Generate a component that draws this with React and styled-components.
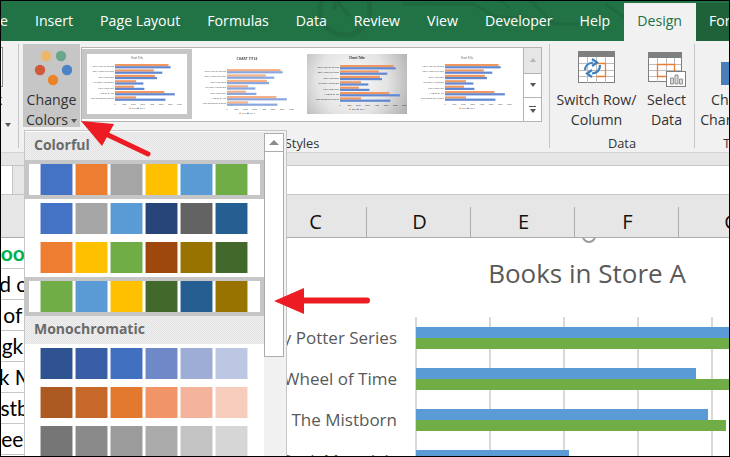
import React from "react";
import styled, { createGlobalStyle } from "styled-components";

const TABS = ["Home", "Insert", "Page Layout", "Formulas", "Data", "Review", "View", "Developer", "Help"];
const COLUMNS = ["A", "B", "C", "D", "E", "F", "G"];
const CELLS = [
  { text: "Books", indent: -13, green: true },
  { text: "Lord of", indent: -30 },
  { text: "Song of", indent: -48 },
  { text: "Kingkiller", indent: -29 },
  { text: "Dark M", indent: -35 },
  { text: "Mistborn", indent: -24 },
  { text: "Sleeping", indent: -15 },
];
const BOOKS = [
  { name: "Harry Potter Series", blue: 330, green: 330 },
  { name: "The Wheel of Time", blue: 280, green: 330 },
  { name: "The Mistborn", blue: 292, green: 310 },
  { name: "His Dark Materials", blue: 153, green: 110 },
];
const PALETTES = [
  {
    title: "Colorful",
    rows: [
      { picked: true, colors: ["#4472c4", "#ed7d31", "#a5a5a5", "#ffc000", "#5b9bd5", "#70ad47"] },
      { colors: ["#4472c4", "#a5a5a5", "#5b9bd5", "#264478", "#636363", "#255e91"] },
      { colors: ["#ed7d31", "#ffc000", "#70ad47", "#9e480e", "#997300", "#43682b"] },
      { picked: true, colors: ["#70ad47", "#5b9bd5", "#ffc000", "#43682b", "#255e91", "#997300"] },
    ],
  },
  {
    title: "Monochromatic",
    rows: [
      { colors: ["#2f5290", "#3a5ea6", "#4170c0", "#6f88c8", "#9dadd6", "#bcc8e3"] },
      { colors: ["#ad5a22", "#c5682a", "#e3782f", "#f19467", "#f3b49b", "#f6ccbd"] },
      { colors: ["#767676", "#8a8a8a", "#9b9b9b", "#ababab", "#c3c3c3", "#d6d6d6"] },
    ],
  },
];

// orange / blue lengths for the small gallery charts
const THUMB_BARS = [
  [51, 53],
  [37, 45],
  [38, 40],
  [20, 27],
  [18, 28],
  [47, 57],
  [20, 48],
];
const THUMB_LABELS = [
  "Harry Potter Series",
  "The Wheel of Time",
  "The Mistborn",
  "His Dark Materials",
  "The Kingkiller",
  "A Song of Ice",
  "The Sleeping Giants",
];
const THUMBS = [
  { key: 1, title: "Chart Title", x: 28, y: 12, step: 5.4, size: 2.6, picked: true },
  { key: 2, title: "CHART TITLE", x: 30, y: 17, step: 5.4, size: 3.4, titleY: 6, hatch: true },
  { key: 3, title: "Chart Title", x: 33, y: 13, step: 5.4, size: 3, dark: true, metal: true },
  { key: 4, title: "Chart Title", x: 28, y: 12, step: 5.4, size: 2.6 },
];

const GlobalStyle = createGlobalStyle`
  html, body {
    margin: 0;
    padding: 0;
    background: #fff;
    font-family: "Open Sans", "Noto Sans", sans-serif;
  }
`;

const Page = styled.div`
  position: relative;
  width: 730px;
  height: 457px;
  overflow: hidden;
  display: flex;
  flex-direction: column;
  background: #fff;

  &::after {
    content: "";
    position: absolute;
    inset: 0;
    border: 1px solid #000;
    pointer-events: none;
    z-index: 20;
  }
`;

const TabBar = styled.div`
  position: relative;
  flex: none;
  height: 41px;
  display: flex;
  align-items: flex-end;
  margin-left: -45.5px;
  background: #217346;
  color: #fff;
`;

const TabArt = styled.svg`
  position: absolute;
  left: 45.5px;
  top: 0;
`;

const Tab = styled.div`
  position: relative;
  flex: none;
  height: 38px;
  padding: 0 13.5px;
  font-size: 14.15px;
  line-height: 36px;
  text-align: center;
  background: ${(p) => (p.$active ? "#f1f1f1" : "transparent")};
  color: ${(p) => (p.$active ? "#217346" : "#fff")};
`;

const DarkTab = styled(Tab)`
  flex: 1;
  text-align: left;
  background: #1f6239;
`;

const Ribbon = styled.div`
  flex: none;
  height: 111px;
  display: flex;
  background: #f1f1f1;
  color: #333;
`;

const Group = styled.div`
  flex: none;
  width: ${(p) => p.$width}px;
  height: 104px;
  margin-top: 3px;
  display: flex;
  flex-direction: column;
  border-right: 1px solid ${(p) => (p.$open ? "transparent" : "#c6c6c6")};
  box-sizing: border-box;
`;

const GroupBody = styled.div`
  flex: 1;
  display: flex;
  align-items: flex-start;
  padding-left: ${(p) => p.$pad || 0}px;
  gap: ${(p) => p.$gap || 0}px;
`;

const GroupLabel = styled.div`
  flex: none;
  height: 20px;
  padding-top: 7px;
  box-sizing: border-box;
  font-size: 12.8px;
  line-height: 16px;
  text-align: center;
`;

const StubBox = styled.div`
  width: 3px;
  height: 40px;
  margin-top: 3px;
  box-sizing: border-box;
  border: 1px solid #8a8a8a;
  border-left: 0;
  background: #fff;
`;

const StubColumn = styled.div`
  display: flex;
  flex-direction: column;
  font-size: 14px;
`;

const StubText = styled.div`
  height: 20px;
  margin: 3px 0 0 -5px;
  line-height: 20px;
`;

const Caret = styled.span`
  display: inline-block;
  width: 0;
  height: 0;
  margin-left: ${(p) => p.$left || 3}px;
  vertical-align: middle;
  border-left: 3.5px solid transparent;
  border-right: 3.5px solid transparent;
  border-top: 4px solid #555;
`;

const StubCaret = styled(Caret)`
  margin: 13px 0 0 5px;
`;

const BigButton = styled.div`
  flex: none;
  width: ${(p) => p.$width}px;
  height: 83px;
  display: flex;
  flex-direction: column;
  align-items: center;
  box-sizing: border-box;
  padding-top: ${(p) => p.$top || 0}px;
  background: ${(p) => (p.$active ? "#c6c6c6" : "transparent")};
  font-size: 14.2px;
  line-height: 20px;
  text-align: center;
  white-space: nowrap;
`;

const ButtonIcon = styled.svg`
  flex: none;
  margin-bottom: ${(p) => p.$gap || 0}px;
`;

const Gallery = styled.div`
  flex: none;
  display: flex;
  width: 443px;
  height: 75px;
  margin: 3px 0 0 1px;
  box-sizing: border-box;
  border: 1px solid #b4b4b4;
  background: #fff;
`;

const ThumbFrame = styled.div`
  flex: none;
  width: 110px;
  height: 70px;
  margin-top: 1px;
  box-sizing: border-box;
  border: 5px solid ${(p) => (p.$picked ? "#c6c6c6" : "transparent")};
  background: ${(p) =>
    p.$metal
      ? "radial-gradient(circle at 45% 45%, #fbfbfb 0, #e4e4e4 55%, #aeaeae 100%) padding-box"
      : "#fff padding-box"};
`;

const ThumbArt = styled.svg`
  display: block;
  width: 100px;
  height: 60px;
  filter: blur(0.45px);
`;

const GalleryScroll = styled.div`
  flex: none;
  width: 18px;
  height: 75px;
  margin-top: 3px;
  display: flex;
  flex-direction: column;
  box-sizing: border-box;
  border: 1px solid #b4b4b4;
  border-left: 0;
`;

const ScrollStep = styled.div`
  flex: ${(p) => p.$size};
  display: flex;
  flex-direction: column;
  align-items: center;
  justify-content: center;
  gap: 2px;
  background: ${(p) => (p.$off ? "#e6e6e6" : "#fff")};
  border-bottom: ${(p) => (p.$last ? "none" : "1px solid #b4b4b4")};
`;

const ScrollBarLine = styled.div`
  width: 7px;
  height: 1px;
  background: #555;
`;

const ScrollCaret = styled(Caret)`
  margin: 0;
  border-top-color: ${(p) => (p.$off ? "#b5b5b5" : "#555")};
  transform: ${(p) => (p.$up ? "rotate(180deg)" : "none")};
`;

const Band = styled.div`
  flex: none;
  height: 13px;
  box-sizing: border-box;
  background: #e6e6e6;
  border-top: 1px solid #d4d4d4;
`;

const FormulaBar = styled.div`
  flex: none;
  height: 30px;
  display: flex;
  box-sizing: border-box;
  background: #e6e6e6;
  border-top: 1px solid #c6c6c6;
  border-bottom: 1px solid #c6c6c6;
`;

const NameBox = styled.div`
  flex: none;
  width: 12px;
  display: flex;
  align-items: center;
  background: #fff;
  border-right: 1px solid #c6c6c6;
`;

const FormulaInput = styled.div`
  flex: 1;
  margin-left: 30px;
  background: #fff;
`;

const ColumnHeader = styled.div`
  flex: none;
  height: 43px;
  display: flex;
  align-items: flex-end;
  padding-left: 55px;
  box-sizing: border-box;
  background: #e6e6e6;
  border-bottom: 1px solid #ababab;
`;

const ColumnCell = styled.div`
  flex: none;
  width: 104px;
  height: 30px;
  padding-left: 2px;
  box-sizing: border-box;
  border-right: 1px solid #ababab;
  font-size: 20px;
  line-height: 30px;
  text-align: center;
  color: #111;
`;

const Sheet = styled.div`
  position: relative;
  flex: 1;
  display: flex;
  min-height: 0;
  overflow: hidden;
`;

const SheetCells = styled.div`
  flex: none;
  width: 24px;
  overflow: hidden;
`;

const Cell = styled.div`
  height: 31px;
  box-sizing: border-box;
  border-bottom: 1px solid #c6c6c6;
  font-family: Lato, "Open Sans", sans-serif;
  font-size: 21px;
  font-weight: ${(p) => (p.$green ? 700 : 400)};
  line-height: 30px;
  white-space: nowrap;
  color: ${(p) => (p.$green ? "#00b050" : "#000")};
`;

const Chart = styled.div`
  flex: none;
  width: 1126px;
  display: flex;
  flex-direction: column;
`;

const ChartTitle = styled.div`
  flex: none;
  height: 79px;
  padding-top: 17px;
  box-sizing: border-box;
  font-size: 26px;
  line-height: 36px;
  text-align: center;
  color: #595959;
`;

const ChartBody = styled.div`
  display: grid;
  grid-template-columns: 373px 1fr;
  column-gap: 18px;
`;

const ChartLabels = styled.div`
  display: flex;
  flex-direction: column;
`;

const ChartLabel = styled.div`
  height: 41px;
  font-size: 17px;
  line-height: 41px;
  text-align: right;
  white-space: nowrap;
  color: #595959;
`;

const Plot = styled.div`
  height: 180px;
  background: repeating-linear-gradient(to right, #d9d9d9 0 2px, transparent 2px 74px);
`;

const BarRow = styled.div`
  height: 41px;
  padding: 10px 0 0 1px;
  box-sizing: border-box;
`;

const Bar = styled.div`
  height: 11px;
  background: ${(p) => p.$color};
`;

const SelectionRing = styled.div`
  position: absolute;
  left: 582px;
  top: -9px;
  width: 14px;
  height: 14px;
  box-sizing: border-box;
  border: 2px solid #9a9a9a;
  border-radius: 50%;
  background: #fff;
`;

const Popup = styled.div`
  position: absolute;
  left: 24px;
  top: 130px;
  width: 263px;
  height: 327px;
  display: flex;
  box-sizing: border-box;
  border: 1px solid #c6c6c6;
  background: #fff;
  overflow: hidden;
  z-index: 5;
`;

const PaletteList = styled.div`
  flex: none;
  width: 239px;
  padding-top: 1px;
`;

const PaletteTitle = styled.div`
  height: 28px;
  padding-left: 9px;
  box-sizing: border-box;
  font-size: 14px;
  font-weight: 700;
  line-height: 26px;
  color: #6a6a6a;
  background: repeating-conic-gradient(#e3e3e3 0 25%, #efefef 0 50%) 0 0 / 2px 2px;
`;

const SwatchRow = styled.div`
  height: 39px;
  display: flex;
  gap: 4px;
  padding-left: 12px;
  box-sizing: border-box;
  border: 4px solid ${(p) => (p.$picked ? "#c6c6c6" : "transparent")};
`;

const Swatch = styled.div`
  flex: none;
  width: 31px;
  height: 31px;
  background: ${(p) => p.$color};
  box-shadow: -1px 0 0 ${(p) => p.$color}77, 1px 0 0 ${(p) => p.$color}77;
`;

const PopupScroll = styled.div`
  flex: 1;
  display: flex;
  flex-direction: column;
  padding: 2px 2px 0 0;
  background: #f1f1f1;
`;

const PopupScrollUp = styled.div`
  flex: none;
  height: 19px;
  display: flex;
  align-items: center;
  justify-content: center;
  box-sizing: border-box;
  border: 1px solid #ababab;
  background: #fff;
`;

const PopupScrollThumb = styled.div`
  flex: none;
  height: 205px;
  box-sizing: border-box;
  border: 1px solid #ababab;
  border-top: 0;
  background: #fff;
`;

const PopupCaret = styled.span`
  width: 0;
  height: 0;
  border-left: 5px solid transparent;
  border-right: 5px solid transparent;
  border-bottom: 5px solid #8a8a8a;
`;

const ArrowLayer = styled.svg`
  position: absolute;
  left: 0;
  top: 0;
  z-index: 10;
  pointer-events: none;
`;

function ThumbChart({ title, x, y, step, size, titleY = 4.5, dark, hatch }) {
  const ink = dark ? "#333" : "#555";
  return (
    <ThumbArt viewBox="0 0 100 60">
      <text x="50" y={titleY} fontSize={size} fontWeight={dark || hatch ? 700 : 400} textAnchor="middle" fill={ink}>
        {title}
      </text>
      {THUMB_BARS.map(([orange, blue], i) => (
        <g key={THUMB_LABELS[i]}>
          <text x={x - 1} y={y + i * step + 1} fontSize="2.5" textAnchor="end" fill={ink}>
            {THUMB_LABELS[i]}
          </text>
          <rect x={x} y={y + i * step - 2} width={orange * 1.05} height="2.2" fill="#f0965f" opacity={hatch ? 0.75 : 1} />
          <rect x={x} y={y + i * step + 0.2} width={blue * 1.05} height="2.2" fill="#6288d2" opacity={hatch ? 0.75 : 1} />
        </g>
      ))}
      {[0, 1, 2, 3, 4, 5, 6, 7].map((t) => (
        <text key={t} x={x + t * 9.2} y={y + 7 * step + 1.4} fontSize="2" textAnchor="middle" fill={ink}>
          {t * 1000}
        </text>
      ))}
      <rect x="42" y={y + 7 * step + 4} width="2" height="1" fill="#f0965f" />
      <text x="45" y={y + 7 * step + 5} fontSize="2" fill={ink}>
        2018
      </text>
      <rect x="50" y={y + 7 * step + 4} width="2" height="1" fill="#6288d2" />
      <text x="53" y={y + 7 * step + 5} fontSize="2" fill={ink}>
        2019
      </text>
    </ThumbArt>
  );
}

function SwitchIcon() {
  return (
    <ButtonIcon width="37" height="33" viewBox="0 0 37 33" $gap={6}>
      <rect x="0.5" y="0.5" width="36" height="31" fill="#fff" stroke="#7f7f7f" />
      <rect x="0" y="0" width="37" height="6" fill="#7f7f7f" />
      <path d="M9.5 6v26M18.5 6v26M27.5 6v26M1 12.5h35M1 19.5h35M1 25.5h35" stroke="#bdbdbd" fill="none" />
      <path d="M18.5 12.5h9v13h-9" stroke="#ed7d31" strokeWidth="1.3" fill="none" />
      <path d="M7 19c0-4 3-7 8-7.500M14 8l5 3.500-5 3.500" stroke="#3f7fbf" strokeWidth="2.200" fill="none" />
      <path d="M22 14c0 5-3 8-8 8.500M14 19l-5 3.500 5 3.500" stroke="#3f7fbf" strokeWidth="2.200" fill="none" />
    </ButtonIcon>
  );
}

function SelectIcon() {
  return (
    <ButtonIcon width="38" height="36" viewBox="0 0 38 36" $gap={3}>
      <rect x="0.5" y="1.500" width="33" height="29" fill="#fff" stroke="#7f7f7f" />
      <rect x="0" y="1" width="34" height="6" fill="#7f7f7f" />
      <path d="M9.500 7v24M18.500 7v24M26.500 7v24M1 13.500h32M1 19.500h32M1 25.500h32" stroke="#bdbdbd" fill="none" />
      <path d="M9.500 13.500h17v12h-17z" stroke="#ed7d31" strokeWidth="1.3" fill="none" />
      <rect x="18.500" y="20.500" width="19" height="15" fill="#fff" stroke="#7f7f7f" />
      <path d="M22.500 33v-6h3v6zM27 33V24h3v9zM31.500 33v-5h3v5z" fill="#d9d9d9" stroke="#7f7f7f" strokeWidth="0.800" />
    </ButtonIcon>
  );
}

export default function App() {
  return (
    <Page>
      <GlobalStyle />
      <TabBar>
        <TabArt width="730" height="41" viewBox="0 0 730 41" fill="none" stroke="#1f6a41" strokeWidth="3">
          <circle cx="345" cy="10" r="25" strokeWidth="5" />
          <path d="M335 -2l14 18M335 -2h12M335 -2v12" strokeWidth="4" />
          <path d="M403 4h70l22 12 60 6M530 0l24 24h30M605 4l24 16" />
          <path d="M430 0v6M500 0l10 8" strokeWidth="2" />
        </TabArt>
        {TABS.map((tab) => (
          <Tab key={tab}>{tab}</Tab>
        ))}
        <Tab $active>Design</Tab>
        <DarkTab>Format</DarkTab>
      </TabBar>

      <Ribbon>
        <Group $width={19}>
          <GroupBody>
            <StubColumn>
              <StubBox />
              <StubText>k</StubText>
              <StubCaret />
            </StubColumn>
          </GroupBody>
        </Group>
        <Group $width={531}>
          <GroupBody $pad={4}>
            <BigButton $width={57} $active $top={2}>
              <ButtonIcon width="40" height="43" viewBox="0 0 40 43" $gap={1}>
                <circle cx="14" cy="10" r="5.200" fill="#edb76a" />
                <circle cx="29" cy="10" r="5.200" fill="#68a78c" />
                <circle cx="8" cy="24" r="5.200" fill="#cf5a38" />
                <circle cx="35" cy="24" r="5.200" fill="#4a84c5" />
                <circle cx="21" cy="34" r="5.200" fill="#ea8426" />
              </ButtonIcon>
              <span>Change</span>
              <span>
                Colors
                <Caret />
              </span>
            </BigButton>
            <Gallery>
              {THUMBS.map((thumb) => (
                <ThumbFrame key={thumb.key} $picked={thumb.picked} $metal={thumb.metal}>
                  <ThumbChart {...thumb} />
                </ThumbFrame>
              ))}
            </Gallery>
            <GalleryScroll>
              <ScrollStep $size={26} $off>
                <ScrollCaret $up $off />
              </ScrollStep>
              <ScrollStep $size={24}>
                <ScrollCaret />
              </ScrollStep>
              <ScrollStep $size={24} $last>
                <ScrollBarLine />
                <ScrollCaret />
              </ScrollStep>
            </GalleryScroll>
          </GroupBody>
          <GroupLabel>Chart Styles</GroupLabel>
        </Group>
        <Group $width={145}>
          <GroupBody $pad={6} $gap={10}>
            <BigButton $width={81} $top={7}>
              <SwitchIcon />
              <span>Switch Row/</span>
              <span>Column</span>
            </BigButton>
            <BigButton $width={39} $top={7}>
              <SelectIcon />
              <span>Select</span>
              <span>Data</span>
            </BigButton>
          </GroupBody>
          <GroupLabel>Data</GroupLabel>
        </Group>
        <Group $width={86} $open>
          <GroupBody $pad={10}>
            <BigButton $width={62} $top={18}>
              <ButtonIcon width="30" height="23" viewBox="0 0 30 23" $gap={5}>
                <rect x="0" y="0" width="30" height="23" fill="#4a7ebb" />
              </ButtonIcon>
              <span>Change</span>
              <span>Chart Type</span>
            </BigButton>
          </GroupBody>
          <GroupLabel>Type</GroupLabel>
        </Group>
      </Ribbon>

      <Band />
      <FormulaBar>
        <NameBox />
        <FormulaInput />
      </FormulaBar>
      <ColumnHeader>
        {COLUMNS.map((col) => (
          <ColumnCell key={col}>{col}</ColumnCell>
        ))}
      </ColumnHeader>

      <Sheet>
        <SheetCells>
          {CELLS.map((cell) => (
            <Cell key={cell.text} $green={cell.green} style={{ textIndent: cell.indent }}>
              {cell.text}
            </Cell>
          ))}
        </SheetCells>
        <Chart>
          <ChartTitle>Books in Store A</ChartTitle>
          <ChartBody>
            <ChartLabels>
              {BOOKS.map((book) => (
                <ChartLabel key={book.name}>{book.name}</ChartLabel>
              ))}
            </ChartLabels>
            <Plot>
              {BOOKS.map((book) => (
                <BarRow key={book.name}>
                  <Bar $color="#5b9bd5" style={{ width: book.blue }} />
                  <Bar $color="#70ad47" style={{ width: book.green }} />
                </BarRow>
              ))}
            </Plot>
          </ChartBody>
        </Chart>
        <SelectionRing />
      </Sheet>

      <Popup>
        <PaletteList>
          {PALETTES.map((palette) => (
            <div key={palette.title}>
              <PaletteTitle>{palette.title}</PaletteTitle>
              {palette.rows.map((row) => (
                <SwatchRow key={row.colors.join()} $picked={row.picked}>
                  {row.colors.map((color, i) => (
                    <Swatch key={i} $color={color} />
                  ))}
                </SwatchRow>
              ))}
            </div>
          ))}
        </PaletteList>
        <PopupScroll>
          <PopupScrollUp>
            <PopupCaret />
          </PopupScrollUp>
          <PopupScrollThumb />
        </PopupScroll>
      </Popup>

      <ArrowLayer width="730" height="457" viewBox="0 0 730 457">
        <path d="M81 121L114 124L102 146Z" fill="#ed1c24" />
        <path d="M106 134L148 154" stroke="#ed1c24" strokeWidth="5" strokeLinecap="round" />
        <path d="M274 301L304 288V314Z" fill="#ed1c24" />
        <path d="M300 300.500H367" stroke="#ed1c24" strokeWidth="6" strokeLinecap="round" />
      </ArrowLayer>
    </Page>
  );
}
